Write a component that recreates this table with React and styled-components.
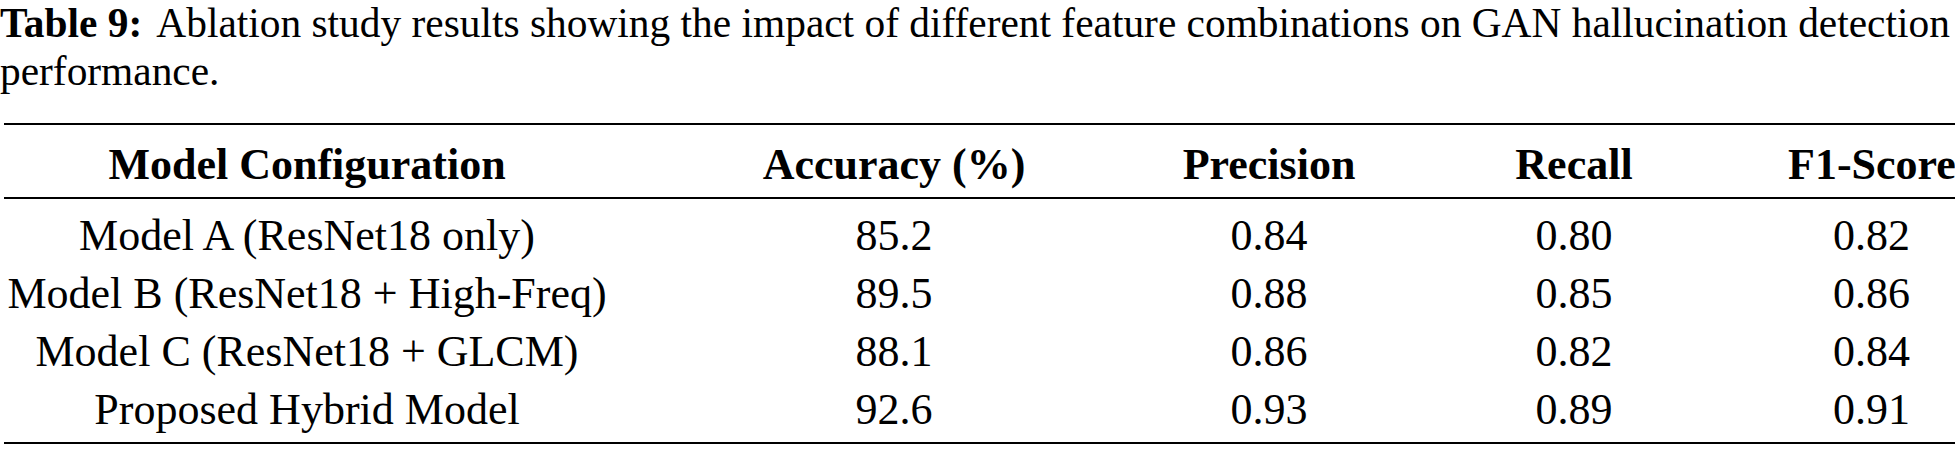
import React from "react";
import styled, { createGlobalStyle } from "styled-components";

const GlobalStyle = createGlobalStyle`
  html, body {
    margin: 0;
    padding: 0;
    background: #fff;
  }
  body {
    font-family: "Liberation Serif", "Times New Roman", serif;
    color: #000;
    overflow: hidden;
  }
`;

const columns = [
  { key: "model", label: "Model Configuration", width: 606 },
  { key: "acc", label: "Accuracy (%)", width: 568 },
  { key: "prec", label: "Precision", width: 182 },
  { key: "rec", label: "Recall", width: 428 },
  { key: "f1", label: "F1-Score", width: 167 },
];

const rows = [
  ["Model A (ResNet18 only)", "85.2", "0.84", "0.80", "0.82"],
  ["Model B (ResNet18 + High-Freq)", "89.5", "0.88", "0.85", "0.86"],
  ["Model C (ResNet18 + GLCM)", "88.1", "0.86", "0.82", "0.84"],
  ["Proposed Hybrid Model", "92.6", "0.93", "0.89", "0.91"],
];

const App = () => {
  return (
    <Page>
      <GlobalStyle />
      <Caption>
        <CaptionLine>
          <Label>Table 9:</Label> Ablation study results showing the impact of
          different feature combinations on GAN hallucination detection
        </CaptionLine>
        <CaptionLine>performance.</CaptionLine>
      </Caption>
      <Table>
        <colgroup>
          {columns.map((col) => (
            <Col key={col.key} $width={col.width} />
          ))}
        </colgroup>
        <thead>
          <tr>
            {columns.map((col) => (
              <HeadCell key={col.key}>{col.label}</HeadCell>
            ))}
          </tr>
        </thead>
        <Body>
          {rows.map((row, index) => (
            <tr key={index}>
              {row.map((value, i) => (
                <Cell key={i} $first={index === 0} $last={index === rows.length - 1}>
                  {value}
                </Cell>
              ))}
            </tr>
          ))}
        </Body>
      </Table>
    </Page>
  );
};

const Page = styled.div`
  width: 1955px;
  height: 449px;
  overflow: hidden;
  font-family: "Liberation Serif", "Times New Roman", serif;
`;

const Caption = styled.div`
  display: flex;
  flex-direction: column;
  gap: 2px;
  font-size: 41.4px;
  line-height: 46px;
  white-space: nowrap;
`;

const CaptionLine = styled.div``;

const Label = styled.span`
  font-weight: bold;
  margin-right: 6px;
`;

const Table = styled.table`
  margin: 29px 0 0 4px;
  width: 1951px;
  table-layout: fixed;
  border-collapse: collapse;
  border-top: 2px solid #000;
  border-bottom: 2px solid #000;
  font-family: "Liberation Serif", "Times New Roman", serif;
  font-size: 44px;
`;

const Col = styled.col`
  width: ${(p) => p.$width}px;
`;

const HeadCell = styled.th`
  font-weight: bold;
  text-align: center;
  line-height: 58px;
  padding: 11px 0 3px;
  border-bottom: 2px solid #000;
  white-space: nowrap;
`;

const Body = styled.tbody``;

const Cell = styled.td`
  text-align: center;
  line-height: 58px;
  padding: ${(p) => (p.$first ? "8px" : "0")} 0 ${(p) => (p.$last ? "3px" : "0")};
  white-space: nowrap;
`;

export default App;
